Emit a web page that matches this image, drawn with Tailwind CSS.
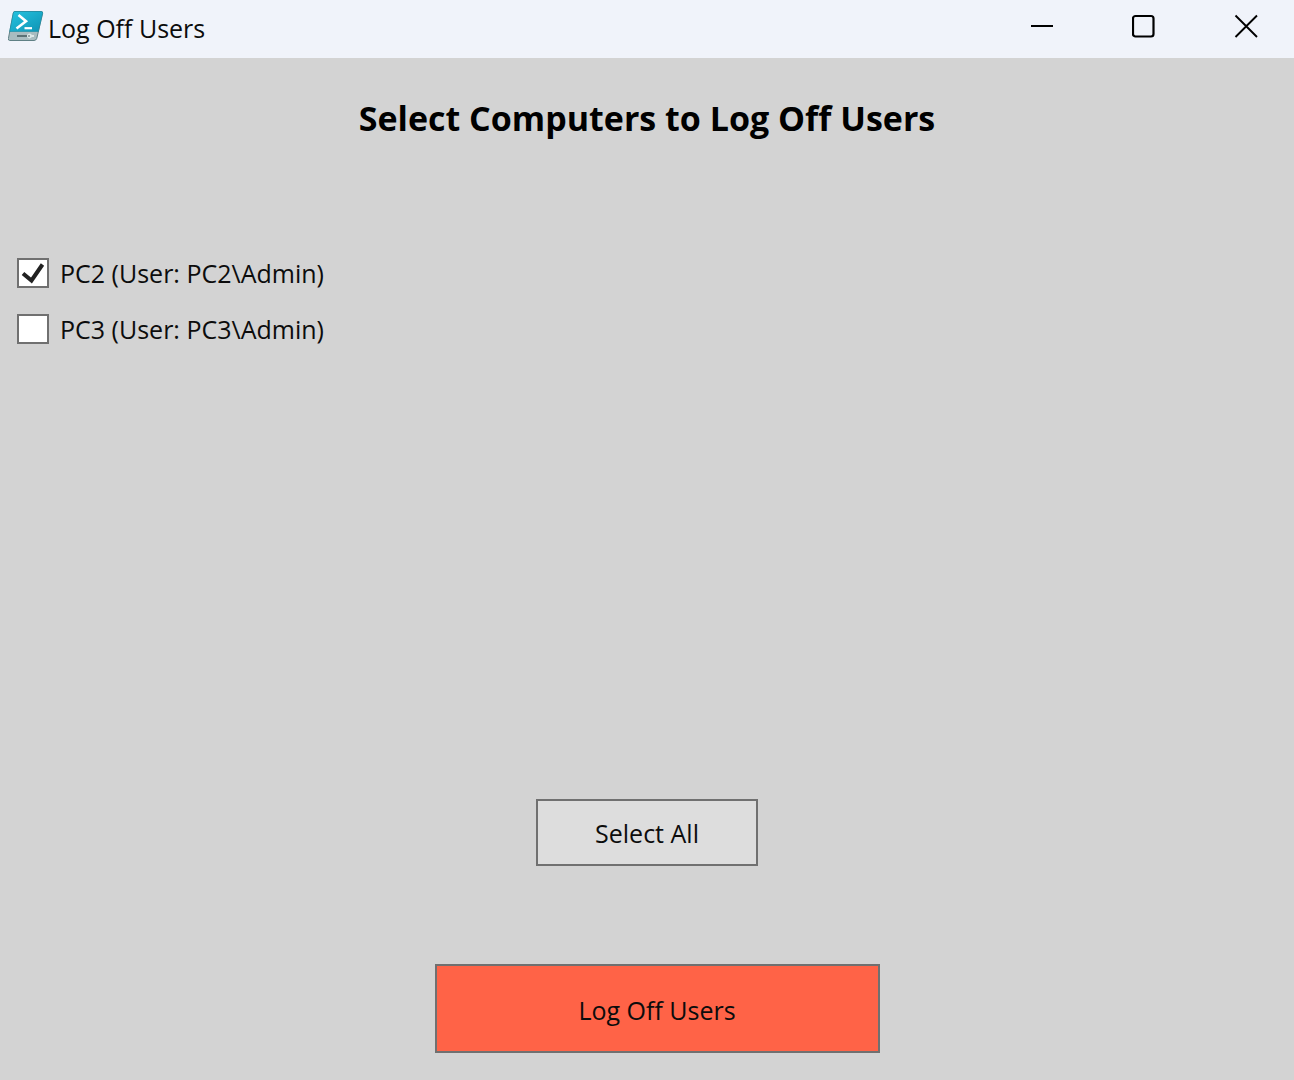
<!DOCTYPE html>
<html lang="en">
<head>
<meta charset="utf-8">
<meta name="viewport" content="width=device-width, initial-scale=1">
<title>Log Off Users</title>
<script src="https://cdn.jsdelivr.net/npm/@tailwindcss/browser@4"></script>
</head>
<body class="flex min-h-screen flex-col bg-[#d3d3d3] font-['Segoe_UI','Open_Sans',sans-serif] text-[25px] leading-9 text-[#0c0c0c]">
  <header class="flex h-[58px] items-center justify-between bg-[#f0f3fa] pb-1.5">
    <div class="flex items-center gap-1 pl-2">
      <svg class="h-8 w-9" viewBox="0 0 36 32" aria-hidden="true">
        <defs>
          <linearGradient id="screen" x1="0" y1="0" x2="1" y2="1">
            <stop offset="0" stop-color="#25c3e0"/>
            <stop offset="1" stop-color="#0f93b4"/>
          </linearGradient>
        </defs>
        <path d="M6.5 1.500H33.200Q35 1.500 34.600 3.300L28.800 28.300Q28.200 30.500 26 30.500H1.800Q0 30.500.400 28.500L5.300 3Q5.600 1.500 6.500 1.500Z" fill="#a9bcc0" stroke="#5f8085"/>
        <path d="M6.500 1.500H33.200Q35 1.500 34.600 3.300L30.300 21.500H1.700L5.300 3Q5.600 1.500 6.500 1.500Z" fill="url(#screen)" stroke="#168ba5" stroke-width=".6"/>
        <path d="M10.500 5L18 11.300L8.500 18.500" fill="none" stroke="#fff" stroke-width="2.600"/>
        <path d="M16.500 18.200H24" stroke="#fff" stroke-width="2.200"/>
        <path d="M9 26H20" stroke="#53696d" stroke-width="1.800"/>
        <path d="M19 26H26" stroke="#edf4f4" stroke-width="1.600"/>
        <circle cx="21.500" cy="26" r="2.400" fill="#dce8e8"/>
        <path d="M20 26H22" stroke="#53696d" stroke-width="1.200"/>
      </svg>
      <span class="pt-1">Log Off Users</span>
    </div>
    <div class="flex gap-1.5 self-stretch text-black">
      <button type="button" aria-label="Minimize" class="flex w-24 items-center justify-center">
        <svg class="size-6" viewBox="0 0 24 24" fill="none" stroke="currentColor" stroke-width="2"><path d="M1 12H23"/></svg>
      </button>
      <button type="button" aria-label="Maximize" class="flex w-24 items-center justify-center">
        <svg class="size-6" viewBox="0 0 24 24" fill="none" stroke="currentColor" stroke-width="2.200"><rect x="1" y="2" width="20.500" height="20.500" rx="2.500"/></svg>
      </button>
      <button type="button" aria-label="Close" class="flex w-24 items-center justify-center">
        <svg class="size-6" viewBox="0 0 24 24" fill="none" stroke="currentColor" stroke-width="1.900"><path d="M1.500 1.500L23 23M23 1.500L1.500 23"/></svg>
      </button>
    </div>
  </header>
  <main class="flex flex-1 flex-col pt-9 pb-[27px]">
    <h1 class="text-center text-[34px] leading-12 font-bold text-black">Select Computers to Log Off Users</h1>
    <div class="mt-[113px] flex flex-col items-start gap-5 pl-[17px]">
      <label class="flex items-center gap-[11px]">
        <span class="grid">
          <input type="checkbox" checked class="peer col-start-1 row-start-1 h-[30px] w-8 appearance-none border-2 border-[#707070] bg-white">
          <svg class="invisible col-start-1 row-start-1 h-[30px] w-8 peer-checked:visible" viewBox="0 0 32 30" fill="none" stroke="#212121" stroke-width="4"><path d="M6 15.500L14.500 22.500L25.500 6.500"/></svg>
        </span>
        PC2 (User: PC2\Admin)
      </label>
      <label class="flex items-center gap-[11px]">
        <span class="grid">
          <input type="checkbox" class="peer col-start-1 row-start-1 h-[30px] w-8 appearance-none border-2 border-[#707070] bg-white">
          <svg class="invisible col-start-1 row-start-1 h-[30px] w-8 peer-checked:visible" viewBox="0 0 32 30" fill="none" stroke="#212121" stroke-width="4"><path d="M6 15.500L14.500 22.500L25.500 6.500"/></svg>
        </span>
        PC3 (User: PC3\Admin)
      </label>
    </div>
    <div class="mt-auto flex flex-col items-center gap-[98px]">
      <button type="button" class="h-[67px] w-[222px] border-2 border-[#707070] bg-[#dddddd]">Select All</button>
      <button type="button" class="ml-5 h-[89px] w-[445px] border-2 border-[#707070] bg-[#ff6347] pt-0.5">Log Off Users</button>
    </div>
  </main>
</body>
</html>
